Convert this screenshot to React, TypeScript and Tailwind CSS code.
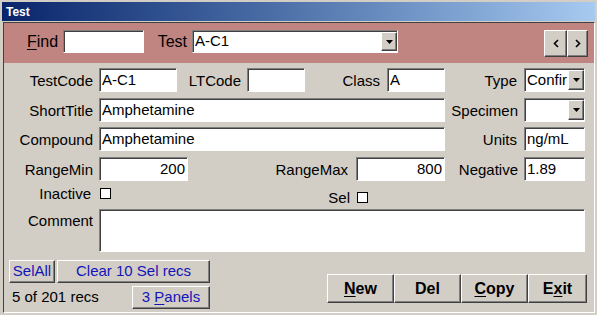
import React from "react";

const sunken =
  "bg-white border border-t-[#808080] border-l-[#808080] border-r-white border-b-white shadow-[inset_1px_1px_0_#404040]";
const raised =
  "bg-[#d2cec6] border border-t-white border-l-white border-r-[#404040] border-b-[#404040] shadow-[inset_-1px_-1px_0_#808080]";

function L({ c, children }: { c: string; children: React.ReactNode }) {
  return <div className={`${c} shrink-0 text-right leading-[17px] whitespace-nowrap`}>{children}</div>;
}

function Input({ c, v, right }: { c: string; v?: string; right?: boolean }) {
  return (
    <div
      className={`${c} ${sunken} h-[24px] shrink-0 flex items-center overflow-hidden whitespace-nowrap ${
        right ? "justify-end pr-[2px]" : "pl-[2px]"
      }`}
    >
      {v}
    </div>
  );
}

function Arrow() {
  return (
    <svg width="7" height="4" viewBox="0 0 7 4">
      <path d="M0 0H7L3.5 4Z" fill="#000" />
    </svg>
  );
}

function Combo({ c, v, h }: { c: string; v?: string; h: string }) {
  return (
    <div className={`${c} ${sunken} ${h} shrink-0 flex items-stretch overflow-hidden`}>
      <div className="flex-1 pl-[2px] flex items-center overflow-hidden whitespace-nowrap">{v}</div>
      <div className={`${raised} w-[16px] my-[1px] mr-0 flex items-center justify-center`}>
        <Arrow />
      </div>
    </div>
  );
}

function Check() {
  return <div className="w-[11px] h-[11px] bg-white border border-black shrink-0" />;
}

export default function App() {
  return (
    <div className="w-[597px] h-[315px] bg-[#d2cec6] overflow-hidden font-['Liberation_Sans',Arial,sans-serif] text-[15px] text-black pt-[2px]">
      {/* Title bar */}
      <div className="mx-[2px] h-[19px] bg-gradient-to-r from-[#0a246a] to-[#a6caf0] flex items-center pl-[4px] text-white font-bold text-[12px]">
        Test
      </div>
      {/* Frame */}
      <div className="mt-[1px] ml-[3px] w-[592px] h-[291px] border border-t-[#404040] border-l-[#404040] border-r-white border-b-white flex flex-col">
        {/* Header band */}
        <div className="h-[40px] bg-[#c18581] flex items-start pt-[7px] text-[16px]">
          <div className="ml-[23px] w-[36px] h-[23px] flex items-center leading-[18px]">
            <span className="underline underline-offset-2">F</span>ind
          </div>
          <div className={`${sunken} w-[81px] h-[23px]`} />
          <div className="w-[48px] h-[23px] flex items-center justify-end pr-[5px] leading-[18px]">Test</div>
          <Combo c="w-[206px] text-[15px]" h="h-[23px]" v="A-C1" />
          <div className="ml-auto mr-[6px] flex">
            <div className={`${raised} w-[23px] h-[27px] flex items-center justify-center`}>
              <svg width="6" height="9" viewBox="0 0 6 9">
                <path d="M5 1L1.5 4.5L5 8" stroke="#000" strokeWidth="1.6" fill="none" />
              </svg>
            </div>
            <div className={`${raised} w-[21px] h-[27px] flex items-center justify-center`}>
              <svg width="6" height="9" viewBox="0 0 6 9">
                <path d="M1 1L4.5 4.5L1 8" stroke="#000" strokeWidth="1.6" fill="none" />
              </svg>
            </div>
          </div>
        </div>

        {/* Row 1 */}
        <div className="mt-[5px] h-[24px] flex items-center">
          <L c="w-[89px]">TestCode</L>
          <Input c="ml-[6px] w-[78px]" v="A-C1" />
          <L c="w-[64px]">LTCode</L>
          <Input c="ml-[6px] w-[58px]" />
          <L c="w-[75px]">Class</L>
          <Input c="ml-[7px] w-[58px]" v="A" />
          <L c="w-[72px]">Type</L>
          <Combo c="ml-[7px] w-[61px]" h="h-[24px]" v="Confir" />
        </div>
        {/* Row 2 */}
        <div className="mt-[6px] h-[24px] flex items-center">
          <L c="w-[89px]">ShortTitle</L>
          <Input c="ml-[6px] w-[346px]" v="Amphetamine" />
          <L c="w-[73px]">Specimen</L>
          <Combo c="ml-[6px] w-[61px]" h="h-[24px]" />
        </div>
        {/* Row 3 */}
        <div className="mt-[5px] h-[24px] flex items-center">
          <L c="w-[89px]">Compound</L>
          <Input c="ml-[6px] w-[346px]" v="Amphetamine" />
          <L c="w-[72px]">Units</L>
          <Input c="ml-[7px] w-[61px]" v="ng/mL" />
        </div>
        {/* Row 4 */}
        <div className="mt-[6px] h-[24px] flex items-center">
          <L c="w-[89px]">RangeMin</L>
          <Input c="ml-[6px] w-[89px]" v="200" right />
          <L c="w-[160px]">RangeMax</L>
          <Input c="ml-[8px] w-[89px]" v="800" right />
          <L c="w-[73px]">Negative</L>
          <Input c="ml-[6px] w-[61px]" v="1.89" />
        </div>
        {/* Row 5 */}
        <div className="h-[28px] flex items-start">
          <div className="mt-[4px] flex items-center">
            <L c="w-[87px]">Inactive</L>
            <div className="ml-[9px]">
              <Check />
            </div>
          </div>
          <div className="mt-[8px] flex items-center">
            <L c="w-[239px]">Sel</L>
            <div className="ml-[7px]">
              <Check />
            </div>
          </div>
        </div>
        {/* Row 6 */}
        <div className="flex items-start">
          <L c="w-[89px] mt-[3px]">Comment</L>
          <div className={`${sunken} ml-[6px] w-[486px] h-[43px]`} />
        </div>
        {/* Bottom */}
        <div className="mt-[8px] flex items-start">
          <div className="ml-[5px] w-[201px] flex flex-col gap-[3px] text-[#1414b8]">
            <div className="flex gap-[2px]">
              <div className={`${raised} w-[46px] h-[23px] flex items-center justify-center`}>SelAll</div>
              <div className={`${raised} w-[153px] h-[23px] flex items-center justify-center`}>
                Clear 10 Sel recs
              </div>
            </div>
            <div className="flex items-center justify-between">
              <div className="pl-[3px] text-black">5 of 201 recs</div>
              <div className={`${raised} w-[78px] h-[23px] flex items-center justify-center`}>
                3&nbsp;<span className="underline underline-offset-2">P</span>anels
              </div>
            </div>
          </div>
          <div className="ml-auto mr-[7px] mt-[14px] flex font-bold text-[16px]">
            <div className={`${raised} w-[67px] h-[29px] flex items-center justify-center`}>
              <span className="underline underline-offset-2">N</span>ew
            </div>
            <div className={`${raised} w-[67px] h-[29px] flex items-center justify-center`}>Del</div>
            <div className={`${raised} w-[67px] h-[29px] flex items-center justify-center`}>
              <span className="underline underline-offset-2">C</span>opy
            </div>
            <div className={`${raised} w-[59px] h-[29px] flex items-center justify-center`}>
              E<span className="underline underline-offset-2">x</span>it
            </div>
          </div>
        </div>
      </div>
    </div>
  );
}
